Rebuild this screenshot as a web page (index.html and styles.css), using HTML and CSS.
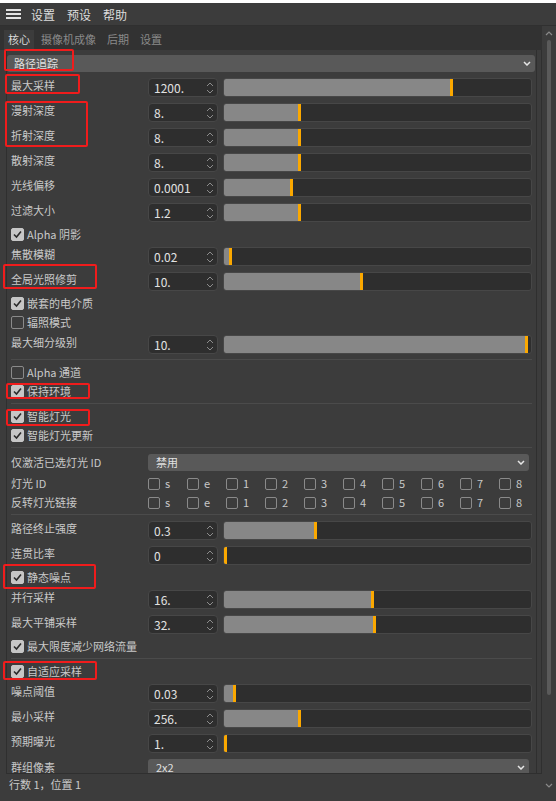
FILE: index.html
```html
<!DOCTYPE html>
<html lang="zh">
<head>
    <meta charset="UTF-8">
    <title>渲染设置</title>
    <link rel="stylesheet" href="styles.css">
</head>
<body>
<div class="app">
    <div class="topline"></div>
    <div class="menubar">
        <div class="burger"><i></i><i></i><i></i></div>
        <span class="menu">设置</span>
        <span class="menu">预设</span>
        <span class="menu">帮助</span>
    </div>

    <div class="body">
        <div class="main">
            <div class="tabs">
                <span class="tab active">核心</span>
                <span class="tab">摄像机成像</span>
                <span class="tab">后期</span>
                <span class="tab">设置</span>
            </div>

            <div class="panel">
                <div class="content">
                    <div class="dd top-dd"><span>路径追踪</span><svg width="8" height="5" viewBox="0 0 8 5"><path d="M1 1L4 4L7 1" fill="none" stroke="#e6e6e6" stroke-width="1.5"/></svg></div>

                    <div class="row field"><span class="label">最大采样</span>
                        <div class="spin"><span>1200.</span><svg width="8" height="14" viewBox="0 0 8 14"><path d="M1 5L4 2L7 5M1 9L4 12L7 9" fill="none" stroke="#8c8c8c"/></svg></div>
                        <div class="slider"><div class="fill" style="width:74.6%"></div></div></div>
                    <div class="row field"><span class="label">漫射深度</span>
                        <div class="spin"><span>8.</span><svg width="8" height="14" viewBox="0 0 8 14"><path d="M1 5L4 2L7 5M1 9L4 12L7 9" fill="none" stroke="#8c8c8c"/></svg></div>
                        <div class="slider"><div class="fill" style="width:25%"></div></div></div>
                    <div class="row field"><span class="label">折射深度</span>
                        <div class="spin"><span>8.</span><svg width="8" height="14" viewBox="0 0 8 14"><path d="M1 5L4 2L7 5M1 9L4 12L7 9" fill="none" stroke="#8c8c8c"/></svg></div>
                        <div class="slider"><div class="fill" style="width:25%"></div></div></div>
                    <div class="row field"><span class="label">散射深度</span>
                        <div class="spin"><span>8.</span><svg width="8" height="14" viewBox="0 0 8 14"><path d="M1 5L4 2L7 5M1 9L4 12L7 9" fill="none" stroke="#8c8c8c"/></svg></div>
                        <div class="slider"><div class="fill" style="width:25%"></div></div></div>
                    <div class="row field"><span class="label">光线偏移</span>
                        <div class="spin"><span>0.0001</span><svg width="8" height="14" viewBox="0 0 8 14"><path d="M1 5L4 2L7 5M1 9L4 12L7 9" fill="none" stroke="#8c8c8c"/></svg></div>
                        <div class="slider"><div class="fill" style="width:22.5%"></div></div></div>
                    <div class="row field"><span class="label">过滤大小</span>
                        <div class="spin"><span>1.2</span><svg width="8" height="14" viewBox="0 0 8 14"><path d="M1 5L4 2L7 5M1 9L4 12L7 9" fill="none" stroke="#8c8c8c"/></svg></div>
                        <div class="slider"><div class="fill" style="width:25%"></div></div></div>

                    <div class="row check"><span class="box on"><svg width="11" height="11" viewBox="0 0 11 11"><path d="M2 5.5L4.5 8L9 2.5" fill="none" stroke="#2a2a2a" stroke-width="1.6"/></svg></span>Alpha 阴影</div>

                    <div class="row field"><span class="label">焦散模糊</span>
                        <div class="spin"><span>0.02</span><svg width="8" height="14" viewBox="0 0 8 14"><path d="M1 5L4 2L7 5M1 9L4 12L7 9" fill="none" stroke="#8c8c8c"/></svg></div>
                        <div class="slider"><div class="fill" style="width:2.6%"></div></div></div>
                    <div class="row field"><span class="label">全局光照修剪</span>
                        <div class="spin"><span>10.</span><svg width="8" height="14" viewBox="0 0 8 14"><path d="M1 5L4 2L7 5M1 9L4 12L7 9" fill="none" stroke="#8c8c8c"/></svg></div>
                        <div class="slider"><div class="fill" style="width:45.2%"></div></div></div>

                    <div class="row check"><span class="box on"><svg width="11" height="11" viewBox="0 0 11 11"><path d="M2 5.5L4.5 8L9 2.5" fill="none" stroke="#2a2a2a" stroke-width="1.6"/></svg></span>嵌套的电介质</div>
                    <div class="row check"><span class="box"></span>辐照模式</div>

                    <div class="row field"><span class="label">最大细分级别</span>
                        <div class="spin"><span>10.</span><svg width="8" height="14" viewBox="0 0 8 14"><path d="M1 5L4 2L7 5M1 9L4 12L7 9" fill="none" stroke="#8c8c8c"/></svg></div>
                        <div class="slider"><div class="fill" style="width:99%"></div></div></div>

                    <div class="sep"></div>
                    <div class="row check"><span class="box"></span>Alpha 通道</div>
                    <div class="row check"><span class="box on"><svg width="11" height="11" viewBox="0 0 11 11"><path d="M2 5.5L4.5 8L9 2.5" fill="none" stroke="#2a2a2a" stroke-width="1.6"/></svg></span>保持环境</div>

                    <div class="sep"></div>
                    <div class="row check"><span class="box on"><svg width="11" height="11" viewBox="0 0 11 11"><path d="M2 5.5L4.5 8L9 2.5" fill="none" stroke="#2a2a2a" stroke-width="1.6"/></svg></span>智能灯光</div>
                    <div class="row check"><span class="box on"><svg width="11" height="11" viewBox="0 0 11 11"><path d="M2 5.5L4.5 8L9 2.5" fill="none" stroke="#2a2a2a" stroke-width="1.6"/></svg></span>智能灯光更新</div>

                    <div class="sep"></div>
                    <div class="row dd-row"><span class="label">仅激活已选灯光 ID</span>
                        <div class="dd"><span>禁用</span><svg width="8" height="5" viewBox="0 0 8 5"><path d="M1 1L4 4L7 1" fill="none" stroke="#e6e6e6" stroke-width="1.5"/></svg></div></div>
                    <div class="row check"><span class="label">灯光 ID</span>
                        <div class="opts">
                            <span class="opt"><span class="box"></span>s</span>
                            <span class="opt"><span class="box"></span>e</span>
                            <span class="opt"><span class="box"></span>1</span>
                            <span class="opt"><span class="box"></span>2</span>
                            <span class="opt"><span class="box"></span>3</span>
                            <span class="opt"><span class="box"></span>4</span>
                            <span class="opt"><span class="box"></span>5</span>
                            <span class="opt"><span class="box"></span>6</span>
                            <span class="opt"><span class="box"></span>7</span>
                            <span class="opt"><span class="box"></span>8</span>
                        </div></div>
                    <div class="row check"><span class="label">反转灯光链接</span>
                        <div class="opts">
                            <span class="opt"><span class="box"></span>s</span>
                            <span class="opt"><span class="box"></span>e</span>
                            <span class="opt"><span class="box"></span>1</span>
                            <span class="opt"><span class="box"></span>2</span>
                            <span class="opt"><span class="box"></span>3</span>
                            <span class="opt"><span class="box"></span>4</span>
                            <span class="opt"><span class="box"></span>5</span>
                            <span class="opt"><span class="box"></span>6</span>
                            <span class="opt"><span class="box"></span>7</span>
                            <span class="opt"><span class="box"></span>8</span>
                        </div></div>

                    <div class="sep"></div>
                    <div class="row field"><span class="label">路径终止强度</span>
                        <div class="spin"><span>0.3</span><svg width="8" height="14" viewBox="0 0 8 14"><path d="M1 5L4 2L7 5M1 9L4 12L7 9" fill="none" stroke="#8c8c8c"/></svg></div>
                        <div class="slider"><div class="fill" style="width:30.3%"></div></div></div>
                    <div class="row field"><span class="label">连贯比率</span>
                        <div class="spin"><span>0</span><svg width="8" height="14" viewBox="0 0 8 14"><path d="M1 5L4 2L7 5M1 9L4 12L7 9" fill="none" stroke="#8c8c8c"/></svg></div>
                        <div class="slider"><div class="fill" style="width:0"></div></div></div>

                    <div class="row check"><span class="box on"><svg width="11" height="11" viewBox="0 0 11 11"><path d="M2 5.5L4.5 8L9 2.5" fill="none" stroke="#2a2a2a" stroke-width="1.6"/></svg></span>静态噪点</div>

                    <div class="row field"><span class="label">并行采样</span>
                        <div class="spin"><span>16.</span><svg width="8" height="14" viewBox="0 0 8 14"><path d="M1 5L4 2L7 5M1 9L4 12L7 9" fill="none" stroke="#8c8c8c"/></svg></div>
                        <div class="slider"><div class="fill" style="width:48.9%"></div></div></div>
                    <div class="row field"><span class="label">最大平铺采样</span>
                        <div class="spin"><span>32.</span><svg width="8" height="14" viewBox="0 0 8 14"><path d="M1 5L4 2L7 5M1 9L4 12L7 9" fill="none" stroke="#8c8c8c"/></svg></div>
                        <div class="slider"><div class="fill" style="width:49.5%"></div></div></div>

                    <div class="row check"><span class="box on"><svg width="11" height="11" viewBox="0 0 11 11"><path d="M2 5.5L4.5 8L9 2.5" fill="none" stroke="#2a2a2a" stroke-width="1.6"/></svg></span>最大限度减少网络流量</div>

                    <div class="sep"></div>
                    <div class="row check"><span class="box on"><svg width="11" height="11" viewBox="0 0 11 11"><path d="M2 5.5L4.5 8L9 2.5" fill="none" stroke="#2a2a2a" stroke-width="1.6"/></svg></span>自适应采样</div>

                    <div class="row field"><span class="label">噪点阈值</span>
                        <div class="spin"><span>0.03</span><svg width="8" height="14" viewBox="0 0 8 14"><path d="M1 5L4 2L7 5M1 9L4 12L7 9" fill="none" stroke="#8c8c8c"/></svg></div>
                        <div class="slider"><div class="fill" style="width:3.9%"></div></div></div>
                    <div class="row field"><span class="label">最小采样</span>
                        <div class="spin"><span>256.</span><svg width="8" height="14" viewBox="0 0 8 14"><path d="M1 5L4 2L7 5M1 9L4 12L7 9" fill="none" stroke="#8c8c8c"/></svg></div>
                        <div class="slider"><div class="fill" style="width:25%"></div></div></div>
                    <div class="row field"><span class="label">预期曝光</span>
                        <div class="spin"><span>1.</span><svg width="8" height="14" viewBox="0 0 8 14"><path d="M1 5L4 2L7 5M1 9L4 12L7 9" fill="none" stroke="#8c8c8c"/></svg></div>
                        <div class="slider"><div class="fill" style="width:0"></div></div></div>

                    <div class="row dd-row"><span class="label">群组像素</span>
                        <div class="dd"><span>2x2</span><svg width="8" height="5" viewBox="0 0 8 5"><path d="M1 1L4 4L7 1" fill="none" stroke="#e6e6e6" stroke-width="1.5"/></svg></div></div>
                </div>
            </div>

            <div class="status">行数 1，位置 1</div>
        </div>

        <div class="scroll">
            <svg width="8" height="5" viewBox="0 0 8 5"><path d="M1 4L4 1L7 4" fill="none" stroke="#8a8a8a" stroke-width="1.2"/></svg>
            <div class="thumb"></div>
            <svg class="down" width="8" height="5" viewBox="0 0 8 5"><path d="M1 1L4 4L7 1" fill="none" stroke="#8a8a8a" stroke-width="1.2"/></svg>
        </div>
    </div>

    <!-- red annotation frames -->
    <div class="mark m1"></div>
    <div class="mark m2"></div>
    <div class="mark m3"></div>
    <div class="mark m4"></div>
    <div class="mark m5"></div>
    <div class="mark m6"></div>
    <div class="mark m7"></div>
    <div class="mark m8"></div>
</div>
</body>
</html>
```

FILE: styles.css
```css
* {
    box-sizing: border-box;
}

body {
    margin: 0;
    background: #3c3c3c;
    font-family: "Noto Sans CJK SC", "Noto Sans", sans-serif;
    font-size: 11px;
    line-height: 15px;
    color: #c9c9c9;
}

.app {
    position: relative;
    width: 556px;
    height: 801px;
    overflow: hidden;
    display: flex;
    flex-direction: column;
}

.topline {
    height: 3px;
    background: #ffffff;
}

/* menu bar */
.menubar {
    height: 23px;
    display: flex;
    align-items: center;
    gap: 12px;
    padding-left: 6px;
    border-bottom: 1px solid #303030;
    font-size: 12px;
    color: #dcdcdc;
}

.burger {
    width: 15px;
    display: flex;
    flex-direction: column;
    gap: 2px;
    margin-right: -2px;
}

.burger i {
    height: 2px;
    background: #e2e2e2;
}

.body {
    flex: 1;
    display: flex;
}

.main {
    width: 542px;
    display: flex;
    flex-direction: column;
}

/* tabs */
.tabs {
    height: 24px;
    background: #323232;
    display: flex;
    align-items: flex-end;
    gap: 3px;
    padding-left: 4px;
}

.tab {
    height: 20px;
    line-height: 19px;
    padding: 0 4px;
    color: #8a8a8a;
}

.tab.active {
    background: #3c3c3c;
    color: #d8d8d8;
}

/* main panel */
.panel {
    height: 724px;
    margin-left: 6px;
    border-left: 1px solid #2f2f2f;
    border-right: 1px solid #2f2f2f;
    border-bottom: 1px solid #2f2f2f;
    overflow: hidden;
}

.content {
    width: 530px;
    height: 100%;
    padding: 5px 4px 0 4px;
    border-right: 1px solid #2f2f2f;
}

.row {
    display: flex;
    align-items: center;
}

.field {
    height: 25px;
}

.check {
    height: 19px;
}

.dd-row {
    height: 23px;
}

.label {
    width: 137px;
    flex: none;
    white-space: nowrap;
}

.field .label {
    padding-bottom: 4px;
}

.spin {
    width: 70px;
    height: 19px;
    flex: none;
    display: flex;
    align-items: center;
    justify-content: space-between;
    padding: 0 3px 0 5px;
    background: #2e2e2e;
    border: 1px solid #474747;
    border-radius: 4px;
    font-size: 12px;
    color: #e2e2e2;
}

.slider {
    flex: 1;
    height: 19px;
    margin-left: 5px;
    background: #2e2e2e;
    border: 1px solid #474747;
    border-radius: 3px;
    overflow: hidden;
}

.fill {
    height: 100%;
    background: #878787;
    border-right: 3px solid #fba800;
}

.box {
    width: 13px;
    height: 13px;
    flex: none;
    margin-right: 3px;
    border: 1px solid #8a8a8a;
    border-radius: 2px;
    display: flex;
    align-items: center;
    justify-content: center;
}

.box.on {
    background: #c6c6c6;
    border-color: #c6c6c6;
}

.opts {
    display: flex;
}

.opt {
    width: 39px;
    display: flex;
    align-items: center;
}

.opt .box {
    width: 12px;
    height: 12px;
    margin-right: 5px;
}

.dd {
    height: 17px;
    display: flex;
    align-items: center;
    justify-content: space-between;
    padding: 0 4px 0 8px;
    background: #595959;
    border-radius: 3px;
    color: #e2e2e2;
}

.dd-row .dd {
    width: 381px;
}

.top-dd {
    margin: 0 -3px 3px -4px;
    padding-left: 7px;
}

.sep {
    height: 1px;
    margin: 2px 0 3px;
    background: #4b4b4b;
}

/* status line */
.status {
    flex: 1;
    padding: 3px 0 0 9px;
    color: #c9c9c9;
}

/* scrollbar */
.scroll {
    width: 14px;
    display: flex;
    flex-direction: column;
    align-items: center;
    padding-top: 5px;
}

.thumb {
    width: 4px;
    height: 655px;
    margin-top: 4px;
    background: #5a5a5a;
    border-radius: 2px;
}

.down {
    margin-top: auto;
    margin-bottom: 13px;
}

/* red annotation frames */
.mark {
    position: absolute;
    border: 2px solid #f01c1c;
    border-radius: 2px;
}

.m1 { left: 4px; top: 49px; width: 70px; height: 22px; }
.m2 { left: 5px; top: 74px; width: 75px; height: 20px; }
.m3 { left: 5px; top: 101px; width: 83px; height: 46px; }
.m4 { left: 3px; top: 264px; width: 94px; height: 25px; }
.m5 { left: 6px; top: 383px; width: 84px; height: 16px; }
.m6 { left: 6px; top: 409px; width: 84px; height: 17px; }
.m7 { left: 3px; top: 564px; width: 93px; height: 25px; }
.m8 { left: 3px; top: 661px; width: 94px; height: 19px; }
```
